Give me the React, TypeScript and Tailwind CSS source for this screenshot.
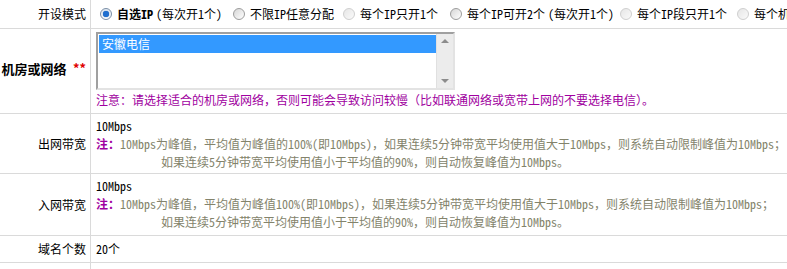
import { ReactNode } from 'react'

const font = "font-['Noto_Sans_Mono_CJK_SC','Noto_Sans_CJK_SC',monospace]"

const Radio = ({ checked, faded }: { checked?: boolean; faded?: boolean }) => {
  if (checked) {
    return (
      <span className="w-[12px] h-[12px] rounded-full border border-[#7a8ea6] bg-gradient-to-b from-[#dfe8f2] to-white flex items-center justify-center shrink-0">
        <span className="w-[6px] h-[6px] rounded-full bg-[#1f6fd0] shadow-[0_0_1px_#0b4fa0]" />
      </span>
    )
  }
  return (
    <span
      className={
        faded
          ? 'w-[12px] h-[12px] rounded-full border border-[#cfcfcf] bg-gradient-to-br from-[#e6e6e6] to-[#fafafa] shrink-0'
          : 'w-[12px] h-[12px] rounded-full border border-[#9c9c9c] bg-gradient-to-br from-[#d6d6d6] to-white shrink-0'
      }
    />
  )
}

const Option = ({
  checked,
  faded,
  width,
  children,
}: {
  checked?: boolean
  faded?: boolean
  width: string
  children: ReactNode
}) => (
  <label className={`flex items-center gap-[5px] shrink-0 ${width}`}>
    <Radio checked={checked} faded={faded} />
    <span>{children}</span>
  </label>
)

const Row = ({
  label,
  className,
  children,
}: {
  label: ReactNode
  className: string
  children: ReactNode
}) => (
  <div className={`flex border-b border-[#dadada] ${className}`}>
    <div className="w-[91px] shrink-0 border-r border-[#dadada] flex items-center justify-end pr-[4px]">
      {label}
    </div>
    <div className="flex-1 min-w-0 pl-[5px]">{children}</div>
  </div>
)

const BandNote = ({ first }: { first: string }) => (
  <div className="leading-[18px] pt-[3px]">
    <div>10Mbps</div>
    <div className="whitespace-nowrap text-[#83836b]">
      <span className="text-[#a000a0] font-bold">注：</span>
      {first}
    </div>
    <div className="whitespace-nowrap text-[#83836b] pl-[65px]">
      如果连续5分钟带宽平均使用值小于平均值的90%，则自动恢复峰值为10Mbps。
    </div>
  </div>
)

export default function App() {
  return (
    <div className={`w-[787px] h-[269px] overflow-hidden bg-white text-black text-[12px] ${font}`}>
      <Row label="开设模式" className="h-[29px]">
        <div className="flex items-center h-full whitespace-nowrap pl-[4px]">
          <Option checked width="w-[133px]">
            <b>自选IP</b>
            <span className="ml-[3px]">(每次开1个)</span>
          </Option>
          <Option width="w-[110px]">不限IP任意分配</Option>
          <Option faded width="w-[107px]">每个IP只开1个</Option>
          <Option width="w-[170px]">
            每个IP可开2个<span className="ml-[3px]">(每次开1个)</span>
          </Option>
          <Option faded width="w-[117px]">每个IP段只开1个</Option>
          <Option faded width="w-[120px]">每个机房只开1个</Option>
        </div>
      </Row>

      <Row
        label={
          <span className="font-bold text-[13px] -mt-[4px]">
            机房或网络 <span className="text-[#e00000]">**</span>
          </span>
        }
        className="h-[85px]"
      >
        <div className="pt-[3px]">
          <div className="w-[359px] h-[58px] flex border-2 border-[#a0a0a0] border-r-[#e3e3e3] border-b-[#e3e3e3] bg-white">
            <div className="flex-1 pt-[1px] pl-[1px]">
              <div className="bg-[#3399ff] text-white h-[18px] leading-[18px] pl-[3px]">安徽电信</div>
            </div>
            <div className="w-[17px] bg-[#ececec] border-l border-[#e0e0e0] flex flex-col items-center justify-between py-[5px]">
              <span className="w-0 h-0 border-x-[4px] border-x-transparent border-b-[4px] border-b-[#8c8c8c]" />
              <span className="w-0 h-0 border-x-[4px] border-x-transparent border-t-[4px] border-t-[#8c8c8c]" />
            </div>
          </div>
          <div className="text-[#a000a0] leading-[18px] mt-[1px] whitespace-nowrap">
            注意：请选择适合的机房或网络，否则可能会导致访问较慢（比如联通网络或宽带上网的不要选择电信）。
          </div>
        </div>
      </Row>

      <Row label="出网带宽" className="h-[60px]">
        <BandNote first="10Mbps为峰值，平均值为峰值的100%(即10Mbps)，如果连续5分钟带宽平均使用值大于10Mbps，则系统自动限制峰值为10Mbps；" />
      </Row>

      <Row label="入网带宽" className="h-[62px]">
        <BandNote first="10Mbps为峰值，平均值为峰值100%(即10Mbps)，如果连续5分钟带宽平均使用值大于10Mbps，则系统自动限制峰值为10Mbps；" />
      </Row>

      <Row label="域名个数" className="h-[27px]">
        <div className="flex items-center h-full">20个</div>
      </Row>

      <Row label="" className="h-[30px]">
        <div />
      </Row>
    </div>
  )
}
